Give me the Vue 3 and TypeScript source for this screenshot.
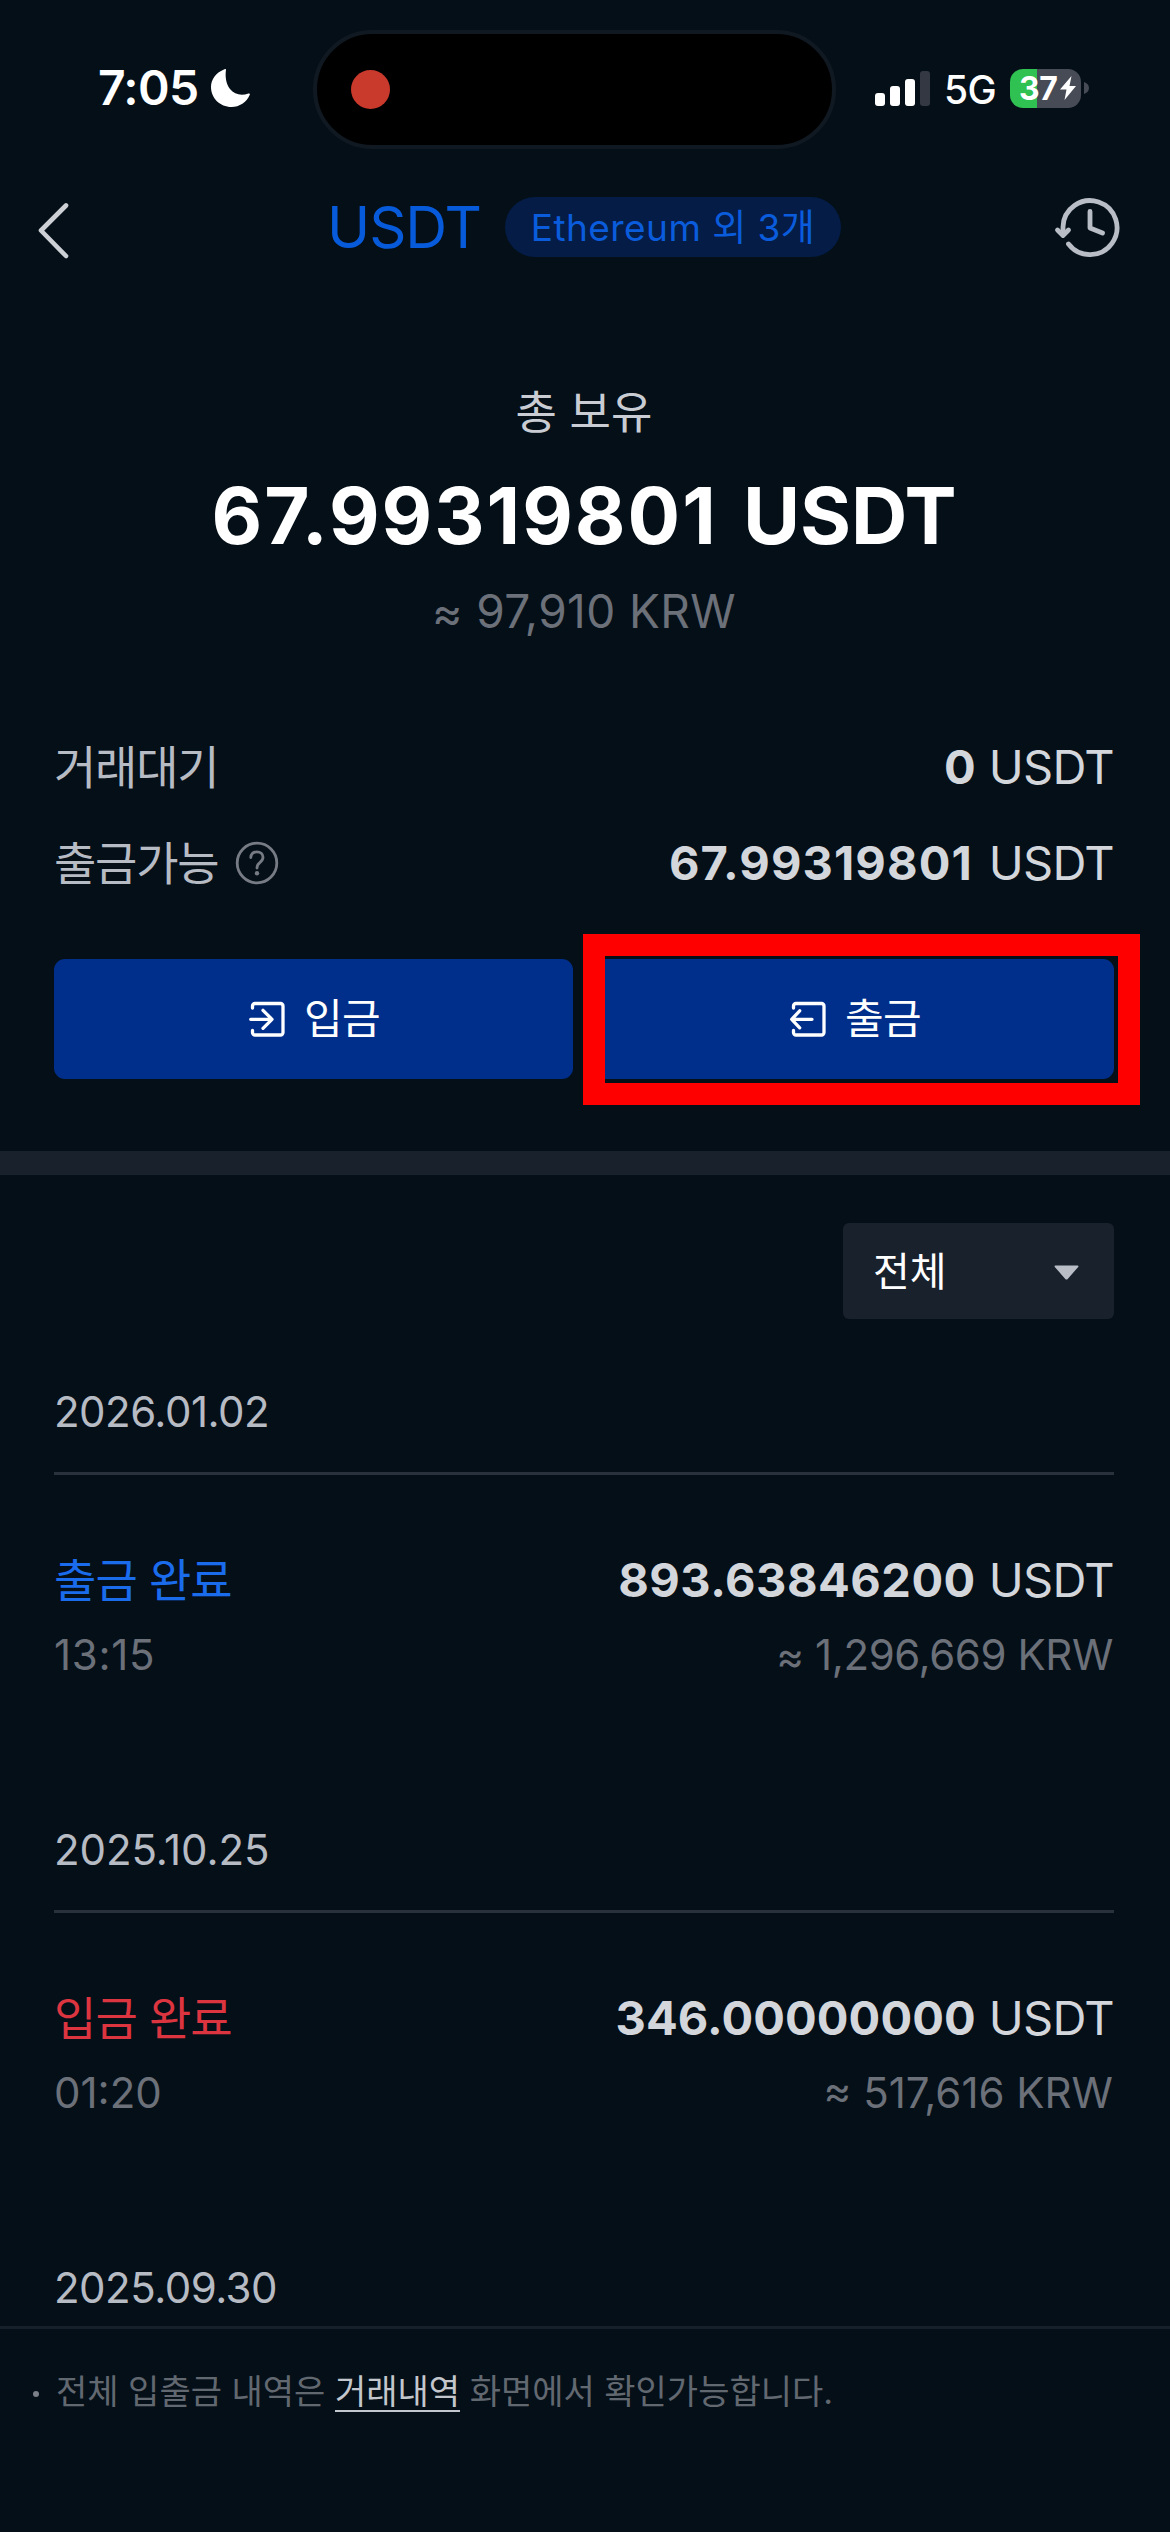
<script setup lang="ts">
interface Transaction {
  date: string
  kind: 'withdraw' | 'deposit'
  label: string
  time: string
  amount: string
  krw: string
}

const transactions: Transaction[] = [
  { date: '2026.01.02', kind: 'withdraw', label: '출금 완료', time: '13:15', amount: '893.63846200', krw: '1,296,669' },
  { date: '2025.10.25', kind: 'deposit', label: '입금 완료', time: '01:20', amount: '346.00000000', krw: '517,616' },
  { date: '2025.09.30', kind: 'withdraw', label: '출금 완료', time: '', amount: '', krw: '' },
]

const signalBars = [13, 20, 27, 35]
</script>

<template>
  <div class="screen">
    <div class="status">
      <div class="clock">
        <span class="time">7:05</span>
        <svg class="moon" viewBox="0 0 39 38" width="39" height="38">
          <path d="M15 .6C14 8 15 15 19 20c4.500 5.500 11 7 18.500 4.500 1-.3 1.700.3 1.300 1.300C35.500 33.500 28.500 38 20.500 38 9 38 0 29 0 18 0 10.500 5 3.500 13.500.2 14.500-.2 15.200 0 15 .6z" fill="#fff" />
        </svg>
      </div>
      <div class="island"><span class="rec"></span></div>
      <div class="signals">
        <div class="bars">
          <span v-for="(h, i) in signalBars" :key="h" class="bar" :class="{ dim: i === 3 }" :style="{ height: h + 'px' }"></span>
        </div>
        <span class="net">5G</span>
        <div class="battery">
          <span class="pct">37</span>
          <svg viewBox="0 0 16 24" width="16" height="24"><path d="M11.500 0L0 13.500h6.500L4.500 24 16 10H9.500z" fill="#fff" /></svg>
        </div>
        <svg class="nub" viewBox="0 0 5 12" width="5" height="12"><path d="M0 0c3 1 5 3 5 6s-2 5-5 6z" fill="#474b56" /></svg>
      </div>
    </div>

    <header class="header">
      <svg class="back" viewBox="0 0 34 60" width="34" height="60"><path d="M31 6.500L6 31.500 31 57" fill="none" stroke="#cdd0d5" stroke-width="4.600" stroke-linecap="round" stroke-linejoin="round" /></svg>
      <div class="title">
        <span class="symbol">USDT</span>
        <span class="chip">Ethereum 외 3개</span>
      </div>
      <svg class="recent" viewBox="0 0 68 64" width="68" height="64" fill="none" stroke="#b9bdc6" stroke-width="4.800" stroke-linecap="round" stroke-linejoin="round">
        <path d="M10 39v-7a27 27 0 1 1 5.500 17" />
        <path d="M4.500 35l5.500 5.500 5.500-5.500" />
        <path d="M37 16.500V33l12.500 5" />
      </svg>
    </header>

    <section class="summary">
      <div class="label">총 보유</div>
      <div class="total"><span class="digits">67.99319801</span> USDT</div>
      <div class="approx"><span class="almost">≈</span> 97,910 KRW</div>
      <div class="rows">
        <div class="row">
          <span class="name">거래대기</span>
          <span class="value"><b>0</b><i>USDT</i></span>
        </div>
        <div class="row">
          <span class="name">출금가능</span>
          <svg class="help" viewBox="0 0 44 44" width="44" height="44" fill="none" stroke="#777b84" stroke-width="2.800">
            <circle cx="22" cy="22" r="19.800" />
            <path d="M15.800 16.500c.3-3.600 2.800-5.600 6.200-5.600s6 2.200 6 5.400c0 2.800-1.600 4.100-3.400 5.500-1.900 1.500-2.600 2.500-2.600 5.200" stroke-linecap="round" />
            <circle cx="22" cy="32.200" r="2.200" fill="#777b84" stroke="none" />
          </svg>
          <span class="value avail"><b>67.99319801</b><i>USDT</i></span>
        </div>
      </div>
      <div class="actions">
        <button class="action" type="button">
          <svg viewBox="0 0 36 36" width="36" height="36" fill="none" stroke="#fff" stroke-width="3.300" stroke-linecap="round" stroke-linejoin="round">
            <path d="M3.500 7V5A2.500 2.500 0 0 1 6 2.500h25.500A2.500 2.500 0 0 1 34 5v26.500a2.500 2.500 0 0 1-2.500 2.500H6a2.500 2.500 0 0 1-2.500-2.500v-2M1.700 18.300H23M14 9.300l9 9-9 9" />
          </svg>
          <span>입금</span>
        </button>
        <button class="action marked" type="button">
          <svg viewBox="0 0 36 36" width="36" height="36" fill="none" stroke="#fff" stroke-width="3.300" stroke-linecap="round" stroke-linejoin="round">
            <path d="M3.500 7V5A2.500 2.500 0 0 1 6 2.500h25.500A2.500 2.500 0 0 1 34 5v26.500a2.500 2.500 0 0 1-2.500 2.500H6a2.500 2.500 0 0 1-2.500-2.500v-2M22 18.300H1.700M9.700 9.800l-8 8.500 8 8.500" />
          </svg>
          <span>출금</span>
        </button>
      </div>
    </section>

    <div class="divider"></div>

    <section class="history">
      <button class="filter" type="button">
        <span>전체</span>
        <svg viewBox="0 0 25 15" width="25" height="15"><path d="M1.500.5h22c1 0 1.300.8.700 1.500L13.700 13.900c-.7.800-1.700.8-2.400 0L.8 2C.2 1.300.500.5 1.500.5z" fill="#b9bdc6" /></svg>
      </button>
      <article v-for="tx in transactions" :key="tx.date" class="group" :class="tx.kind">
        <div class="date">{{ tx.date }}</div>
        <template v-if="tx.time">
          <div class="line main">
            <span class="state">{{ tx.label }}</span>
            <span class="value"><b>{{ tx.amount }}</b><i>USDT</i></span>
          </div>
          <div class="line sub">
            <span class="clocked">{{ tx.time }}</span>
            <span class="krw"><span class="almost">≈</span> {{ tx.krw }} KRW</span>
          </div>
        </template>
      </article>
    </section>

    <footer class="footer">
      <span class="dot"></span>
      <p>전체 입출금 내역은 <a>거래내역</a> 화면에서 확인가능합니다.</p>
    </footer>
  </div>
</template>

<style>
body {
  margin: 0;
  background: #050f18;
}
</style>

<style scoped>
.screen {
  width: 1170px;
  height: 2532px;
  display: flex;
  flex-direction: column;
  overflow: hidden;
  background: #050f18;
  color: #d3d6db;
  font-family: Inter, "Noto Sans CJK KR", sans-serif;
  box-sizing: border-box;
}
svg {
  display: block;
  flex: none;
  overflow: visible;
}
button {
  border: 0;
  padding: 0;
  font: inherit;
}
i {
  font-style: normal;
}

.status {
  height: 176px;
  display: flex;
  align-items: center;
  color: #fff;
}
.clock {
  width: 313px;
  display: flex;
  align-items: center;
  box-sizing: border-box;
  padding-left: 98px;
}
.time {
  width: 113px;
  font-size: 48px;
  line-height: 60px;
  font-weight: 600;
  letter-spacing: -0.7px;
}
.island {
  width: 523px;
  height: 119px;
  margin-top: 2px;
  border: 4px solid #101922;
  border-radius: 60px;
  box-sizing: border-box;
  background: #000;
  display: flex;
  align-items: center;
  padding-left: 34px;
}
.rec {
  width: 39px;
  height: 39px;
  border-radius: 50%;
  background: #c9392c;
}
.signals {
  flex: 1;
  display: flex;
  align-items: center;
  padding-left: 39px;
}
.bars {
  display: flex;
  align-items: flex-end;
  gap: 5px;
  height: 35px;
}
.bar {
  width: 10px;
  border-radius: 3px;
  background: #fff;
}
.bar.dim {
  background: #333842;
}
.net {
  width: 66px;
  margin-left: 14px;
  font-size: 39px;
  line-height: 40px;
  font-weight: 500;
  letter-spacing: -0.6px;
  padding-top: 4px;
}
.battery {
  width: 71px;
  height: 39px;
  border-radius: 13px;
  background: linear-gradient(90deg, #2fc151 0 27px, #474b56 27px);
  display: flex;
  align-items: center;
  box-sizing: border-box;
  padding-left: 9px;
  gap: 1px;
}
.pct {
  width: 40px;
  font-size: 32px;
  line-height: 39px;
  font-weight: 700;
  letter-spacing: -0.5px;
}
.nub {
  margin-left: 3px;
}

.header {
  height: 102px;
  display: flex;
  align-items: center;
  padding: 0 49px 0 35px;
}
.back {
  margin-top: 4px;
}
.title {
  flex: 1;
  display: flex;
  align-items: center;
  padding-left: 258px;
}
.symbol {
  width: 178px;
  font-size: 58px;
  line-height: 72px;
  color: #075bdb;
  letter-spacing: -1px;
}
.chip {
  width: 336px;
  height: 60px;
  border-radius: 30px;
  background: #041c46;
  color: #0b5cdc;
  font-size: 37px;
  line-height: 62px;
  letter-spacing: 0.45px;
  text-align: center;
  white-space: nowrap;
}

.summary {
  padding: 105px 56px 0 54px;
}
.label {
  font-size: 45px;
  line-height: 60px;
  text-align: center;
  color: #c9cdd3;
}
.total {
  margin-top: 32px;
  font-size: 78px;
  line-height: 81px;
  font-weight: 700;
  text-align: center;
  color: #fff;
  letter-spacing: -0.2px;
  word-spacing: 7px;
  white-space: nowrap;
}
.digits {
  letter-spacing: 2px;
}
.approx {
  margin-top: 25px;
  font-size: 46px;
  line-height: 60px;
  letter-spacing: 0.4px;
  text-align: center;
  color: #6b7079;
}
.almost {
  position: relative;
  top: 1px;
}
.rows {
  margin-top: 78px;
}
.row {
  height: 96px;
  display: flex;
  align-items: center;
}
.name {
  font-size: 46px;
  line-height: 60px;
  letter-spacing: -1.2px;
  color: #b7bbc3;
}
.help {
  margin-left: 17px;
}
.value {
  margin-left: auto;
  display: flex;
  gap: 13px;
  font-size: 47px;
  line-height: 60px;
}
.value b {
  font-weight: 700;
}
.value i {
  letter-spacing: -0.7px;
}
.avail {
  gap: 16px;
}
.avail b {
  letter-spacing: 1.1px;
}
.actions {
  margin-top: 48px;
  display: flex;
  gap: 22px;
}
.action {
  position: relative;
  flex: 1;
  height: 120px;
  border-radius: 11px;
  background: #002f8b;
  color: #fff;
  display: flex;
  align-items: center;
  justify-content: center;
  gap: 19px;
  font-size: 42px;
  line-height: 60px;
  letter-spacing: -0.6px;
  padding-left: 2px;
}
.marked::after {
  content: "";
  position: absolute;
  inset: -25px -26px -26px -12px;
  border: 22px solid #f00;
}

.divider {
  flex: none;
  height: 24px;
  margin-top: 72px;
  background: #18212c;
}

.history {
  flex: 1;
  min-height: 0;
  overflow: hidden;
  display: flex;
  flex-direction: column;
  padding: 48px 56px 0 54px;
}
.filter {
  flex: none;
  align-self: flex-end;
  width: 271px;
  height: 96px;
  border-radius: 6px;
  background: #18212c;
  color: #fff;
  display: flex;
  align-items: center;
  justify-content: space-between;
  padding: 2px 35px 0 30px;
  box-sizing: border-box;
  font-size: 40px;
  line-height: 60px;
}
.group {
  flex: none;
  height: 375px;
  margin-top: 63px;
}
.date {
  height: 90px;
  border-bottom: 3px solid #29313c;
  font-size: 42px;
  line-height: 60px;
  color: #b7bbc3;
}
.line {
  display: flex;
  justify-content: space-between;
  line-height: 60px;
}
.main {
  margin-top: 75px;
  font-size: 46px;
}
.state {
  letter-spacing: -0.9px;
}
.sub {
  margin-top: 15px;
  padding-right: 1px;
  font-size: 42px;
  color: #6b7079;
}
.withdraw .date {
  letter-spacing: -0.5px;
}
.withdraw .state {
  color: #1a6cec;
}
.withdraw b {
  letter-spacing: 0.5px;
}
.withdraw .clocked {
  letter-spacing: 0.7px;
}
.withdraw .krw {
  letter-spacing: -0.4px;
}
.deposit .date {
  letter-spacing: -0.1px;
}
.deposit .state {
  color: #dc3540;
}
.deposit b {
  letter-spacing: 0.1px;
}

.footer {
  flex: none;
  height: 206px;
  box-sizing: border-box;
  border-top: 3px solid #16202a;
  padding: 36px 0 0 33px;
  display: flex;
  align-items: flex-start;
  color: #626870;
}
.dot {
  width: 6px;
  height: 6px;
  margin-top: 26px;
  border-radius: 50%;
  background: #7b8088;
}
.footer p {
  margin: 0 0 0 17px;
  font-size: 34px;
  line-height: 54px;
  white-space: nowrap;
}
.footer a {
  display: inline-block;
  height: 45px;
  color: #c3c7cd;
  border-bottom: 2px solid #c3c7cd;
}
</style>
